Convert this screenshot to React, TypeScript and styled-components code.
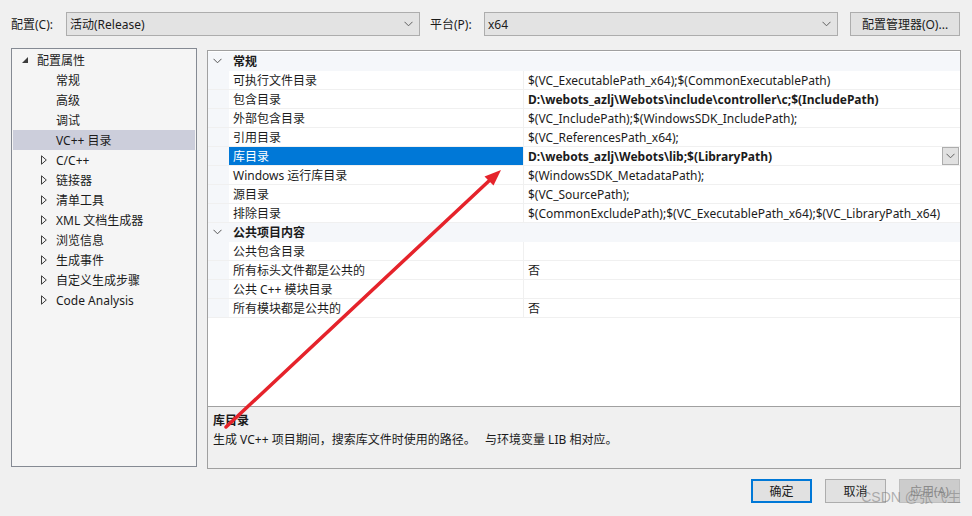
import React from 'react';
import styled, { createGlobalStyle } from 'styled-components';

const GlobalStyle = createGlobalStyle`
  html, body {
    margin: 0;
    padding: 0;
    background: #f0f0f0;
  }
  body {
    font-family: "Noto Sans", "Noto Sans CJK SC", sans-serif;
    font-size: 12px;
    color: #1b1b1b;
  }
`;

const Page = styled.div`
  position: relative;
  width: 972px;
  height: 516px;
  box-sizing: border-box;
  padding: 11px 11px 0 11px;
  display: flex;
  flex-direction: column;
  overflow: hidden;
`;

const TopBar = styled.div`
  display: flex;
  align-items: center;
  height: 25px;
`;

const Label = styled.span<{ $width: number; $gap?: number }>`
  width: ${(p) => p.$width}px;
  margin-left: ${(p) => p.$gap ?? 0}px;
  flex: none;
  white-space: nowrap;
`;

const Combo = styled.div`
  width: 354px;
  height: 24px;
  box-sizing: border-box;
  margin-top: 1px;
  border: 1px solid #adadad;
  background: #e3e3e3;
  display: flex;
  align-items: center;
  padding: 0 6px 0 3px;
  flex: none;
  span {
    flex: 1;
  }
`;

const Button = styled.button<{ $primary?: boolean; $disabled?: boolean }>`
  box-sizing: border-box;
  height: 24px;
  font: inherit;
  color: ${(p) => (p.$disabled ? '#8a8a8a' : '#1b1b1b')};
  background: ${(p) => (p.$disabled ? '#cccccc' : '#e1e1e1')};
  border: ${(p) =>
    p.$primary ? '2px solid #0078d7' : p.$disabled ? '1px solid #bfbfbf' : '1px solid #adadad'};
  padding: 0;
  flex: none;
`;

const ManagerButton = styled(Button)`
  width: 110px;
  margin-left: 12px;
`;

const Main = styled.div`
  display: flex;
  gap: 10px;
  margin-top: 12px;
`;

const TreePane = styled.div`
  width: 186px;
  height: 419px;
  box-sizing: border-box;
  border: 1px solid #858a93;
  background: #f5f5f5;
  padding: 1px 1px;
`;

const TreeRow = styled.div<{ $level: number; $selected?: boolean }>`
  height: 20px;
  display: flex;
  align-items: center;
  padding-left: ${(p) => (p.$level === 0 ? 9 : 28)}px;
  background: ${(p) => (p.$selected ? '#cccedb' : 'transparent')};
  white-space: nowrap;
`;

const Expander = styled.span`
  width: 15px;
  display: flex;
  align-items: center;
  flex: none;
`;

const RightCol = styled.div`
  width: 754px;
  margin-top: 2px;
  display: flex;
  flex-direction: column;
`;

const Grid = styled.div`
  height: 357px;
  box-sizing: border-box;
  border: 1px solid #a0a0a0;
  background: #ffffff;
  padding-top: 1px;
`;

const Row = styled.div<{ $category?: boolean }>`
  height: 19px;
  box-sizing: border-box;
  display: grid;
  grid-template-columns: 21px 294px 1fr;
  background: ${(p) => (p.$category ? '#f5f7fa' : '#ffffff')};
  border-bottom: 1px solid ${(p) => (p.$category ? '#f5f7fa' : '#f0f0f0')};
  white-space: nowrap;
`;

const Margin = styled.div`
  background: #f5f7fa;
  display: flex;
  align-items: center;
  justify-content: center;
  padding-right: 2px;
`;

const NameCell = styled.div<{ $selected?: boolean }>`
  display: flex;
  align-items: center;
  padding-left: 4px;
  background: ${(p) => (p.$selected ? '#0078d7' : 'transparent')};
  color: ${(p) => (p.$selected ? '#ffffff' : 'inherit')};
`;

const CategoryName = styled.div`
  grid-column: 2 / 4;
  display: flex;
  align-items: center;
  padding-left: 4px;
  font-weight: bold;
`;

const ValueCell = styled.div<{ $bold?: boolean }>`
  display: flex;
  align-items: center;
  padding-left: 4px;
  border-left: 1px solid #f0f0f0;
  font-weight: ${(p) => (p.$bold ? 'bold' : 'normal')};
  overflow: hidden;
  span {
    flex: 1;
  }
`;

const DropButton = styled.div`
  width: 17px;
  height: 18px;
  box-sizing: border-box;
  border: 1px solid #adadad;
  background: #e1e1e1;
  display: flex;
  align-items: center;
  justify-content: center;
  margin-right: 1px;
`;

const Description = styled.div`
  height: 62px;
  box-sizing: border-box;
  border: 1px solid #a0a0a0;
  border-top: none;
  padding: 5px 5px;
  display: flex;
  flex-direction: column;
  gap: 1px;
`;

const DescTitle = styled.div`
  font-weight: bold;
  line-height: 18px;
`;

const DescText = styled.div`
  line-height: 18px;
  white-space: pre;
`;

const Footer = styled.div`
  display: flex;
  justify-content: flex-end;
  gap: 13px;
  margin-top: 10px;
  padding-right: 1px;
`;

const FooterButton = styled(Button)`
  width: 61px;
`;

const Overlay = styled.svg`
  position: absolute;
  left: 0;
  top: 0;
  pointer-events: none;
`;

const Watermark = styled.div`
  position: absolute;
  right: 11px;
  bottom: 10px;
  font-family: "Liberation Sans", "Noto Sans CJK SC", sans-serif;
  font-size: 14px;
  color: rgba(120, 120, 120, 0.55);
  white-space: nowrap;
`;

const Chevron = ({ color = '#606060' }: { color?: string }) => (
  <svg width="9" height="6" viewBox="0 0 9 6">
    <path d="M0.5 0.8 L4.5 4.8 L8.5 0.8" fill="none" stroke={color} strokeWidth="1" />
  </svg>
);

const Expanded = () => (
  <svg width="6" height="6" viewBox="0 0 6 6">
    <path d="M6 0 L6 6 L0 6 Z" fill="#3c3c3c" />
  </svg>
);

const Collapsed = () => (
  <svg width="6" height="10" viewBox="0 0 6 10">
    <path d="M0.5 0.8 L5.3 5 L0.5 9.2 Z" fill="none" stroke="#3c3c3c" strokeWidth="1" />
  </svg>
);

type TreeItem = { label: string; level: number; expandable?: boolean; selected?: boolean };

const treeItems: TreeItem[] = [
  { label: '配置属性', level: 0 },
  { label: '常规', level: 1 },
  { label: '高级', level: 1 },
  { label: '调试', level: 1 },
  { label: 'VC++ 目录', level: 1, selected: true },
  { label: 'C/C++', level: 1, expandable: true },
  { label: '链接器', level: 1, expandable: true },
  { label: '清单工具', level: 1, expandable: true },
  { label: 'XML 文档生成器', level: 1, expandable: true },
  { label: '浏览信息', level: 1, expandable: true },
  { label: '生成事件', level: 1, expandable: true },
  { label: '自定义生成步骤', level: 1, expandable: true },
  { label: 'Code Analysis', level: 1, expandable: true },
];

type GridItem =
  | { kind: 'category'; name: string }
  | { kind: 'prop'; name: string; value: string; bold?: boolean; selected?: boolean };

const gridItems: GridItem[] = [
  { kind: 'category', name: '常规' },
  { kind: 'prop', name: '可执行文件目录', value: '$(VC_ExecutablePath_x64);$(CommonExecutablePath)' },
  { kind: 'prop', name: '包含目录', value: 'D:\\webots_azlj\\Webots\\include\\controller\\c;$(IncludePath)', bold: true },
  { kind: 'prop', name: '外部包含目录', value: '$(VC_IncludePath);$(WindowsSDK_IncludePath);' },
  { kind: 'prop', name: '引用目录', value: '$(VC_ReferencesPath_x64);' },
  { kind: 'prop', name: '库目录', value: 'D:\\webots_azlj\\Webots\\lib;$(LibraryPath)', bold: true, selected: true },
  { kind: 'prop', name: 'Windows 运行库目录', value: '$(WindowsSDK_MetadataPath);' },
  { kind: 'prop', name: '源目录', value: '$(VC_SourcePath);' },
  { kind: 'prop', name: '排除目录', value: '$(CommonExcludePath);$(VC_ExecutablePath_x64);$(VC_LibraryPath_x64)' },
  { kind: 'category', name: '公共项目内容' },
  { kind: 'prop', name: '公共包含目录', value: '' },
  { kind: 'prop', name: '所有标头文件都是公共的', value: '否' },
  { kind: 'prop', name: '公共 C++ 模块目录', value: '' },
  { kind: 'prop', name: '所有模块都是公共的', value: '否' },
];

const App = () => (
  <>
    <GlobalStyle />
    <Page>
      <TopBar>
        <Label $width={55}>配置(C):</Label>
        <Combo>
          <span>活动(Release)</span>
          <Chevron />
        </Combo>
        <Label $width={54} $gap={10}>
          平台(P):
        </Label>
        <Combo>
          <span>x64</span>
          <Chevron />
        </Combo>
        <ManagerButton>配置管理器(O)...</ManagerButton>
      </TopBar>

      <Main>
        <TreePane>
          {treeItems.map((item) => (
            <TreeRow key={item.label} $level={item.level} $selected={item.selected}>
              <Expander>
                {item.level === 0 ? <Expanded /> : item.expandable ? <Collapsed /> : null}
              </Expander>
              {item.label}
            </TreeRow>
          ))}
        </TreePane>

        <RightCol>
          <Grid>
            {gridItems.map((item) =>
              item.kind === 'category' ? (
                <Row key={item.name} $category>
                  <Margin>
                    <Chevron color="#555" />
                  </Margin>
                  <CategoryName>{item.name}</CategoryName>
                </Row>
              ) : (
                <Row key={item.name}>
                  <Margin />
                  <NameCell $selected={item.selected}>{item.name}</NameCell>
                  <ValueCell $bold={item.bold}>
                    <span>{item.value}</span>
                    {item.selected && (
                      <DropButton>
                        <Chevron />
                      </DropButton>
                    )}
                  </ValueCell>
                </Row>
              )
            )}
          </Grid>
          <Description>
            <DescTitle>库目录</DescTitle>
            <DescText>生成 VC++ 项目期间，搜索库文件时使用的路径。   与环境变量 LIB 相对应。</DescText>
          </Description>
        </RightCol>
      </Main>

      <Footer>
        <FooterButton $primary>确定</FooterButton>
        <FooterButton>取消</FooterButton>
        <FooterButton $disabled>应用(A)</FooterButton>
      </Footer>

      <Overlay width="972" height="516" viewBox="0 0 972 516">
        <line x1="226" y1="427" x2="491" y2="179" stroke="#e5232b" strokeWidth="3.5" strokeLinecap="round" />
        <polygon points="501,170 493.5,185.5 484.5,176.5" fill="#e5232b" />
      </Overlay>
      <Watermark>CSDN @张飞生</Watermark>
    </Page>
  </>
);

export default App;
